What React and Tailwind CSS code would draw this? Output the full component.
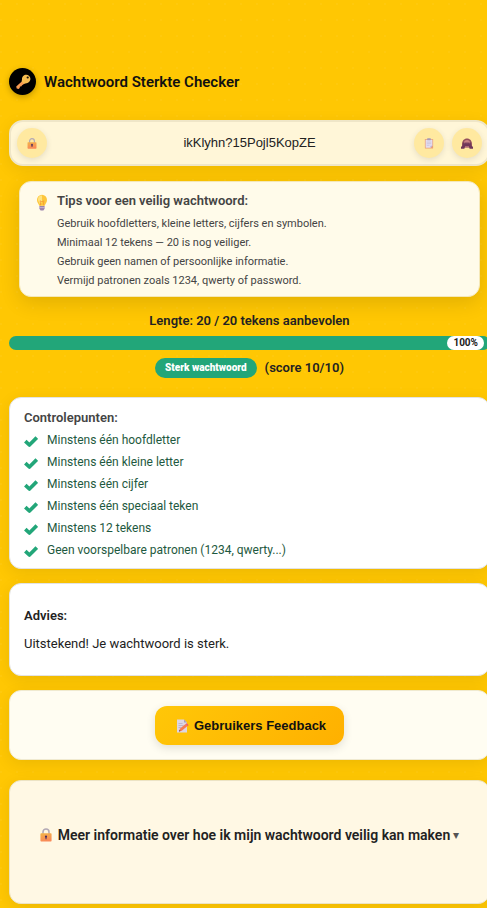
import React from "react";

const cardShadow = "shadow-[0_4px_16px_rgba(0,0,0,0.08)]";

function LockIcon({ className }) {
  return (
    <svg className={className} viewBox="0 0 14 16" aria-hidden="true">
      <path d="M3.5 8V4.5a3.5 3.5 0 0 1 7 0V8" fill="none" stroke="#b3a9b5" strokeWidth="1.8" />
      <defs>
        <linearGradient id="lockBody" x1="0" y1="0" x2="0.3" y2="1">
          <stop offset="0" stopColor="#f3b548" />
          <stop offset="1" stopColor="#f98a58" />
        </linearGradient>
      </defs>
      <rect x="0.5" y="6" width="13" height="9.5" rx="0.8" fill="url(#lockBody)" />
      <circle cx="7" cy="9.8" r="1.3" fill="#4b2b63" />
      <path d="M6.4 10h1.2v3H6.4z" fill="#4b2b63" />
    </svg>
  );
}

function KeyIcon({ className }) {
  return (
    <svg className={className} viewBox="0 0 16 16" aria-hidden="true">
      <path d="M8.2 6.2 1.2 12.6l.5 2 2 .5 1.1-1.3.1-1.2 1.3-.1.9-1.2 3-2z" fill="#f89b52" />
      <path d="M7 5.400C6.800 2.600 9 .8 11.200.8c2.400 0 4.200 1.700 4.200 4 0 2.600-2 4.600-4.900 4.600L8.600 9.600 6.600 7.600z" fill="#f7bd51" />
      <circle cx="12.700" cy="3.500" r="1.100" fill="#1d1408" />
    </svg>
  );
}

function ClipboardIcon({ className }) {
  return (
    <svg className={className} viewBox="0 0 10 12" aria-hidden="true">
      <rect x="0.500" y="1" width="9" height="10.500" rx="0.600" fill="#e9a077" />
      <path d="M1.300 2h7.400v6.500l-2 2.200H1.300z" fill="#e4def0" />
      <path d="M6.700 10.700V8.500h2z" fill="#b5a6cc" />
      <rect x="3" y="0.300" width="4" height="2.200" rx="0.600" fill="#a79bb8" />
      <path d="M2.500 4.500h5M2.500 6.200h5M2.500 8h3" stroke="#bdb2d1" strokeWidth="0.600" />
    </svg>
  );
}

function MonkeyIcon({ className }) {
  return (
    <svg className={className} viewBox="0 0 12 11" aria-hidden="true">
      <path d="M1 6.500C1 2.800 3 .6 6 .6s5 2.200 5 5.900v3H1z" fill="#94505c" />
      <path d="M3 4.600c0-1.600 1.300-2.600 3-2.600s3 1 3 2.600v4H3z" fill="#c98284" />
      <path d="M0 10.800V9c.4-.6 1-.8 1.500-1l.8-3.200 1-.6.300 1.600.9-1.800.5 1.800.8-1.800h.4l.8 1.800.5-1.800.9 1.800.3-1.600 1 .6.8 3.200c.5.2 1.100.4 1.500 1v1.800H8.600L7.800 8H4.200l-.8 2.800z" fill="#70385a" />
      <path d="M4.300 8h3.400l.4 1.300H3.900z" fill="#b0697a" />
    </svg>
  );
}

function BulbIcon({ className }) {
  return (
    <svg className={className} viewBox="0 0 12 18" aria-hidden="true">
      <path d="M6 .8a5 5 0 0 0-5 5.100c0 2.500 1.700 3.500 2.200 5.900h5.600c.5-2.400 2.200-3.400 2.200-5.900A5 5 0 0 0 6 .8z" fill="#fdc63c" />
      <path d="M6 1.500a4 4 0 0 0-4 4c0 1.900 1.200 2.800 1.700 4.400L6 8z" fill="#ffe37e" />
      <path d="M4.700 11.500 4.200 6.800l1.800 1 1.800-1-.5 4.700" fill="none" stroke="#f59a33" strokeWidth="0.800" />
      <path d="M3.400 12h5.200v2.800L7.400 16.600H4.600l-1.200-1.800z" fill="#9c83ad" />
      <path d="M3.400 13.600h5.200" stroke="#d5c6df" strokeWidth="0.700" />
    </svg>
  );
}

function MemoIcon({ className }) {
  return (
    <svg className={className} viewBox="0 0 13 14" aria-hidden="true">
      <path d="M1 .5h7l3 3v10H1z" fill="#ddd6e4" />
      <path d="M8 .5v3h3z" fill="#aaa0b5" />
      <path d="M2.500 4.500h4M2.500 6.500h5M2.500 8.500h3" stroke="#b8adc6" strokeWidth="0.800" />
      <path d="m3 12.500.8-2.700 5.800-4.700 1.900 2-5.700 4.700z" fill="#f77d51" />
      <path d="m9.600 5.100 1.200-.9 1.800 2-1.100.9z" fill="#ef5369" />
      <path d="m3 12.500.5-1.600 1.100 1.200z" fill="#4b2b63" />
    </svg>
  );
}

function CheckIcon() {
  return (
    <svg className="mt-[5px] h-3 w-[14px] shrink-0" viewBox="0 0 14 12" aria-hidden="true">
      <path d="M1.300 5.200 5.400 9 12.800 1.600" fill="none" stroke="#22a679" strokeWidth="3.700" strokeLinejoin="round" />
    </svg>
  );
}

const tips = [
  "Gebruik hoofdletters, kleine letters, cijfers en symbolen.",
  "Minimaal 12 tekens — 20 is nog veiliger.",
  "Gebruik geen namen of persoonlijke informatie.",
  "Vermijd patronen zoals 1234, qwerty of password.",
];

const checks = [
  "Minstens één hoofdletter",
  "Minstens één kleine letter",
  "Minstens één cijfer",
  "Minstens één speciaal teken",
  "Minstens 12 tekens",
  "Geen voorspelbare patronen (1234, qwerty...)",
];

const roundButton =
  "flex size-[30px] items-center justify-center rounded-full bg-[#ffe9a0] shadow-[0_2px_6px_rgba(0,0,0,0.1)]";

export default function App() {
  return (
    <div className="min-h-screen overflow-hidden bg-[#ffc703] bg-[radial-gradient(rgba(255,255,255,0.04)_1px,transparent_1px)] bg-[size:16px_16px] bg-[position:-7px_-4px] font-['Roboto',sans-serif] text-[#222222]">
      <main className="-mr-[3px] ml-[9px] flex flex-col pt-[68px] pb-1">
        <header className="flex items-center gap-2">
          <span className="flex size-[27px] items-center justify-center rounded-full bg-black shadow-[0_2px_6px_rgba(0,0,0,0.25)]">
            <KeyIcon className="size-4" />
          </span>
          <h1 className="text-[15px] leading-6 font-semibold text-[#111111]">Wachtwoord Sterkte Checker</h1>
        </header>

        <div className="relative mt-[25px]">
          <input
            type="text"
            aria-label="Wachtwoord"
            defaultValue="ikKlyhn?15Pojl5KopZE"
            className={`block h-[46px] w-full rounded-[14px] border-2 border-[#efe6c8] bg-[#fff6d8] px-12 pb-[2px] text-center font-['Liberation_Sans',sans-serif] text-[13px] outline-none ${cardShadow}`}
          />
          <button type="button" aria-label="Vergrendelen" className={`absolute top-2 left-2 ${roundButton}`}>
            <LockIcon className="h-[11px] w-[10px]" />
          </button>
          <div className="absolute top-2 right-2 flex gap-2">
            <button type="button" aria-label="Kopiëren" className={roundButton}>
              <ClipboardIcon className="h-[11px] w-[10px]" />
            </button>
            <button type="button" aria-label="Verbergen" className={roundButton}>
              <MonkeyIcon className="h-[11px] w-3" />
            </button>
          </div>
        </div>

        <section className="mx-[10px] mt-[15px] flex gap-[9px] rounded-xl border border-[#f5e8b8] bg-[#fffbea] px-4 pt-[10px] pb-[6px] text-[#444444] shadow-[0_6px_20px_rgba(0,0,0,0.12)]">
          <BulbIcon className="mt-[2px] h-[18px] w-3 shrink-0" />
          <div>
            <h2 className="text-[13px] leading-[18px] font-semibold">Tips voor een veilig wachtwoord:</h2>
            <ul className="mt-1 text-[11px] leading-[19px]">
              {tips.map((tip) => (
                <li key={tip}>{tip}</li>
              ))}
            </ul>
          </div>
        </section>

        <p className="mt-[14px] text-center text-[13px] leading-5 font-semibold">Lengte: 20 / 20 tekens aanbevolen</p>
        <div className="mt-[5px] flex h-[14px] justify-end rounded-full bg-[#22a679] pr-[6px]">
          <span className="rounded-full bg-white px-[6px] text-[10px] leading-[14px] font-bold">100%</span>
        </div>
        <div className="mt-2 flex items-center justify-center gap-2">
          <span className="rounded-full bg-[#22a679] px-[10px] text-[10px] leading-5 font-black text-white">
            Sterk wachtwoord
          </span>
          <span className="text-[13px] leading-5 font-semibold">(score 10/10)</span>
        </div>

        <section className={`mt-[19px] rounded-xl border border-[#e3e3e3] bg-white px-[14px] pt-[10px] pb-[7px] ${cardShadow}`}>
          <h2 className="text-[13px] leading-5 font-semibold text-[#444444]">Controlepunten:</h2>
          <ul className="mt-px text-[12px] leading-[18px] text-[#1e5940]">
            {checks.map((check) => (
              <li key={check} className="flex gap-[9px] py-[2px]">
                <CheckIcon />
                {check}
              </li>
            ))}
          </ul>
        </section>

        <section className={`mt-[14px] rounded-xl border border-[#e3e3e3] bg-white px-[14px] pt-[22px] pb-[21px] text-[13px] leading-5 ${cardShadow}`}>
          <h2 className="font-semibold">Advies:</h2>
          <p className="mt-2">Uitstekend! Je wachtwoord is sterk.</p>
        </section>

        <section className={`mt-[14px] flex justify-center rounded-xl border border-[#f0ead0] bg-[#fffdf2] pt-[15px] pb-[14px] ${cardShadow}`}>
          <button
            type="button"
            className="flex h-[39px] items-center gap-[5px] rounded-xl bg-linear-135 from-[#ffc708] to-[#ffb000] pr-[18px] pl-[21px] font-['Liberation_Sans',sans-serif] text-[13px] font-bold text-[#111111] shadow-[0_3px_10px_rgba(0,0,0,0.12)]"
          >
            <MemoIcon className="h-[14px] w-[13px]" />
            Gebruikers Feedback
          </button>
        </section>

        <section className={`mt-5 flex justify-center rounded-xl border border-[#ece3c4] bg-[#fff8e4] pt-[35px] pb-[49px] ${cardShadow}`}>
          <button type="button" className="flex h-[38px] items-center text-[14px] font-semibold">
            <LockIcon className="mr-1.5 h-[14px] w-3" />
            Meer informatie over hoe ik mijn wachtwoord veilig kan maken
            <span className="ml-[3px] text-[12px] font-normal text-[#555555]">▾</span>
          </button>
        </section>
      </main>
    </div>
  );
}
